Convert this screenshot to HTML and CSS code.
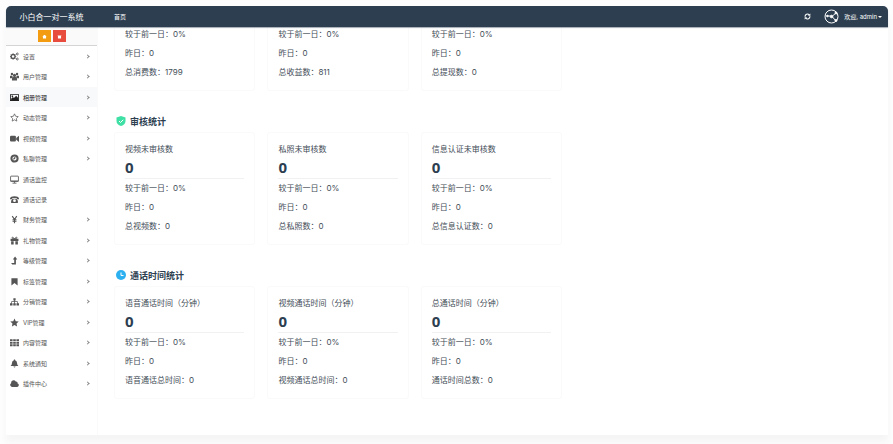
FILE: index.html
```html
<!DOCTYPE html>
<html lang="zh-CN">
<head>
    <meta charset="UTF-8">
    <meta name="viewport" content="width=device-width, initial-scale=1.0">
    <title>小白合一对一系统</title>
    <link rel="stylesheet" href="styles.css">
</head>
<body>
    <div class="window">
        <!-- Header -->
        <header class="topbar">
            <a class="logo" href="#">小白合一对一系统</a>
            <a class="tab" href="#">首页</a>
            <div class="topbar-right">
                <button class="icon-btn" type="button" aria-label="刷新">
                    <svg viewBox="0 0 16 16" fill="none" stroke="currentColor" stroke-width="2.4"><path d="M2.5 8.5A5.5 5.5 0 0 1 12 4.200M13.500 7.500A5.500 5.500 0 0 1 4 11.800"/><path d="M14.500 1v5.500H9zM1.500 15V9.500H7z" fill="currentColor" stroke="none"/></svg>
                </button>
                <button class="user" type="button">
                    <svg class="avatar" viewBox="0 0 30 30" fill="none" stroke="currentColor" stroke-width="2"><circle cx="15" cy="15" r="13"/><path d="M3 14h10M17 14l8-7M17 16l7 8"/><circle cx="15" cy="15" r="2.500" fill="currentColor"/><circle cx="24" cy="8" r="2" fill="currentColor"/><circle cx="24" cy="23" r="2" fill="currentColor"/><circle cx="7" cy="14" r="1.500" fill="currentColor"/></svg>
                    <span>欢迎, admin</span>
                    <span class="caret"></span>
                </button>
            </div>
        </header>

        <div class="body">
            <!-- Sidebar -->
            <aside class="sidebar">
                <div class="shortcuts">
                    <button class="shortcut shortcut-home" type="button" aria-label="主页">
                        <svg viewBox="0 0 16 16" fill="currentColor"><path d="M8 2l7 6h-2v6H3V8H1z"/></svg>
                    </button>
                    <button class="shortcut shortcut-clear" type="button" aria-label="清除">
                        <svg viewBox="0 0 16 16" fill="currentColor"><path d="M2 3h12v2H2zM3 6h10v8H3z"/></svg>
                    </button>
                </div>
                <nav class="menu">
                    <a href="#"><svg viewBox="0 0 16 16" fill="none" stroke="currentColor"><circle cx="5.500" cy="8" r="3.500" stroke-width="2.400"/><path d="M5.500 2.500v2M5.500 11.500v2M0 8h2M9 8h2M1.500 4l1.500 1.500M8 10.500L9.500 12M1.500 12L3 10.500M8 5.500L9.500 4" stroke-width="1.500"/><circle cx="13" cy="3.500" r="1.700" stroke-width="1.500"/><circle cx="13" cy="12.500" r="1.700" stroke-width="1.500"/></svg><span>设置</span><i class="arrow"></i></a>
                    <a href="#"><svg viewBox="0 0 16 16" fill="currentColor"><circle cx="3.500" cy="3.500" r="2.200"/><circle cx="12.500" cy="3.500" r="2.200"/><circle cx="8" cy="6" r="2.800"/><path d="M0 10V7q2-2 4 0l1 2-2 2H0zM16 10V7q-2-2-4 0l-1 2 2 2h3zM3.500 15v-3q0-3 2.500-3h4q2.500 0 2.500 3v3z"/></svg><span>用户管理</span><i class="arrow"></i></a>
                    <a class="active" href="#"><svg viewBox="0 0 16 16" fill="currentColor"><path fill-rule="evenodd" d="M0 2h16v12H0zM1.500 3.500v9h13v-9z"/><path d="M2 12.500V10l3-3 2 2 4-4 3.500 4v3.500zM3 4.500h2.500V7H3z"/></svg><span>相册管理</span><i class="arrow"></i></a>
                    <a href="#"><svg viewBox="0 0 16 16" fill="none" stroke="currentColor" stroke-width="1.300"><path d="M8 1.500l2 4.300 4.700.6-3.400 3.300.8 4.700L8 12.100l-4.100 2.300.8-4.700-3.400-3.300L6 5.800z"/></svg><span>动态管理</span><i class="arrow"></i></a>
                    <a href="#"><svg viewBox="0 0 16 16" fill="currentColor"><rect y="3" width="10.500" height="10.500" rx="2"/><path d="M11 7l5-4v11l-5-4z"/></svg><span>视频管理</span><i class="arrow"></i></a>
                    <a href="#"><svg viewBox="0 0 16 16" fill="none" stroke="currentColor"><circle cx="8" cy="8" r="5.500" stroke-width="3.600"/><path d="M5 10l2-4 3-1-1 4z" fill="currentColor" stroke="none"/></svg><span>私聊管理</span><i class="arrow"></i></a>
                    <a href="#"><svg viewBox="0 0 16 16" fill="none" stroke="currentColor" stroke-width="1.500"><rect x="1" y="2" width="14" height="9.500" rx="1"/><path d="M1 10.500h14M8 11v3M4.500 14.500h7"/></svg><span>通话监控</span></a>
                    <a href="#"><svg viewBox="0 0 16 16" fill="currentColor"><path d="M0 6q1-4 8-4t8 4v1.500h-4V5.500H4v2H0z"/><path fill-rule="evenodd" d="M4.500 6.500h7L14 10v4H2v-4zM8 7.500a2.500 2.500 0 1 0 0 5 2.500 2.500 0 0 0 0-5z"/></svg><span>通话记录</span></a>
                    <a href="#"><svg viewBox="0 0 16 16" fill="none" stroke="currentColor" stroke-width="2"><path d="M4 2l4 6 4-6M8 8v6.500M4.500 8.500h7M4.500 11h7"/></svg><span>财务管理</span><i class="arrow"></i></a>
                    <a href="#"><svg viewBox="0 0 16 16" fill="currentColor"><path d="M1 5h14v4H1zM2 9.500h4.500V15H2zM9.500 9.500H14V15H9.500z"/><path d="M8 5Q3 5 3.500 2.500T8 5q4-5 4.500-2.500T8 5z" fill="none" stroke="currentColor" stroke-width="1.500"/></svg><span>礼物管理</span><i class="arrow"></i></a>
                    <a href="#"><svg viewBox="0 0 16 16" fill="currentColor"><path d="M9 1l4 5h-2.500v9H4l-2-2.500h5.500V6H5z"/></svg><span>等级管理</span><i class="arrow"></i></a>
                    <a href="#"><svg viewBox="0 0 16 16" fill="currentColor"><path d="M2.500 2h11v13L8 10.500 2.500 15z"/></svg><span>标签管理</span><i class="arrow"></i></a>
                    <a href="#"><svg viewBox="0 0 16 16" fill="currentColor"><path d="M6 2h4v4H8.700v1.500h5V11H16v4h-4.500v-4h1V9H8.700v2h1.500v4H5.800v-4h1.500V9H3.500v2h1v4H0v-4h2.300V7.500h5V6H6z"/></svg><span>分销管理</span><i class="arrow"></i></a>
                    <a href="#"><svg viewBox="0 0 16 16" fill="currentColor"><path d="M8 1l2.200 4.700 5.300.6-3.900 3.600 1 5.100L8 12.500 3.400 15l1-5.100L.5 6.300l5.300-.6z"/></svg><span>VIP管理</span><i class="arrow"></i></a>
                    <a href="#"><svg viewBox="0 0 16 16" fill="currentColor"><path d="M0 2h4.600v3.500H0zM5.700 2h4.600v3.500H5.700zM11.400 2H16v3.500h-4.600zM0 6.500h4.600V10H0zM5.700 6.500h4.600V10H5.700zM11.400 6.500H16V10h-4.600zM0 11h4.600v3.500H0zM5.700 11h4.600v3.500H5.700zM11.400 11H16v3.500h-4.600z"/></svg><span>内容管理</span><i class="arrow"></i></a>
                    <a href="#"><svg viewBox="0 0 16 16" fill="currentColor"><path d="M7 1h2v1.300q3.500.7 3.500 5 0 3.500 2.500 5.200H1q2.500-1.700 2.500-5.200 0-4.300 3.500-5zM6 13.300h4q-2 3.200-4 0z"/></svg><span>系统通知</span><i class="arrow"></i></a>
                    <a href="#"><svg viewBox="0 0 16 16" fill="currentColor"><path d="M3.500 14a3.500 3.500 0 0 1-1.500-6.500 4.500 4.500 0 0 1 8.200-3 2.800 2.800 0 0 1 3.300 3.300A3.200 3.200 0 0 1 13 14z"/></svg><span>插件中心</span><i class="arrow"></i></a>
                </nav>
            </aside>

            <!-- Main Content -->
            <main class="content">
                <section class="stats">
                    <div class="cards">
                        <div class="card">
                            <p>较于前一日：0%</p>
                            <p>昨日：0</p>
                            <p>总消费数：1799</p>
                        </div>
                        <div class="card">
                            <p>较于前一日：0%</p>
                            <p>昨日：0</p>
                            <p>总收益数：811</p>
                        </div>
                        <div class="card">
                            <p>较于前一日：0%</p>
                            <p>昨日：0</p>
                            <p>总提现数：0</p>
                        </div>
                    </div>
                </section>

                <section class="stats">
                    <h2>
                        <svg viewBox="0 0 20 20"><path d="M10 0l9 3v7q0 7-9 10Q1 17 1 10V3z" fill="#3fe0a5"/><path d="M6 10l3 3 5.500-5.500" fill="none" stroke="#fff" stroke-width="2"/></svg>
                        审核统计
                    </h2>
                    <div class="cards">
                        <div class="card">
                            <h3>视频未审核数</h3>
                            <strong>0</strong>
                            <p>较于前一日：0%</p>
                            <p>昨日：0</p>
                            <p>总视频数：0</p>
                        </div>
                        <div class="card">
                            <h3>私照未审核数</h3>
                            <strong>0</strong>
                            <p>较于前一日：0%</p>
                            <p>昨日：0</p>
                            <p>总私照数：0</p>
                        </div>
                        <div class="card">
                            <h3>信息认证未审核数</h3>
                            <strong>0</strong>
                            <p>较于前一日：0%</p>
                            <p>昨日：0</p>
                            <p>总信息认证数：0</p>
                        </div>
                    </div>
                </section>

                <section class="stats">
                    <h2>
                        <svg viewBox="0 0 20 20"><circle cx="10" cy="10" r="10" fill="#2db0f0"/><path d="M10 5v6h5" fill="none" stroke="#fff" stroke-width="2"/></svg>
                        通话时间统计
                    </h2>
                    <div class="cards">
                        <div class="card">
                            <h3>语音通话时间（分钟）</h3>
                            <strong>0</strong>
                            <p>较于前一日：0%</p>
                            <p>昨日：0</p>
                            <p>语音通话总时间：0</p>
                        </div>
                        <div class="card">
                            <h3>视频通话时间（分钟）</h3>
                            <strong>0</strong>
                            <p>较于前一日：0%</p>
                            <p>昨日：0</p>
                            <p>视频通话总时间：0</p>
                        </div>
                        <div class="card">
                            <h3>总通话时间（分钟）</h3>
                            <strong>0</strong>
                            <p>较于前一日：0%</p>
                            <p>昨日：0</p>
                            <p>通话时间总数：0</p>
                        </div>
                    </div>
                </section>
            </main>
        </div>
    </div>
</body>
</html>
```

FILE: styles.css
```css
/* Reset and Base Styles */
* {
    margin: 0;
    padding: 0;
    box-sizing: border-box;
}

:root {
    --navy: #2c3e50;
    --text: #3f4d57;
    --line: #f0f1f2;
}

body {
    height: 100vh;
    padding: 6px 5px 9px 6px;
    background-color: #fdfdfd;
    color: var(--text);
    font-family: Inter, "Noto Sans CJK SC", sans-serif;
    font-size: 8px;
    overflow: hidden;
}

a {
    color: inherit;
    text-decoration: none;
}

button {
    border: none;
    background: none;
    color: inherit;
    font: inherit;
    cursor: pointer;
}

.window {
    height: 100%;
    display: flex;
    flex-direction: column;
    border-radius: 5px 5px 0 0;
    background-color: #fff;
    box-shadow: 0 7px 6px #f5f5f5;
}

/* Header Styles */
.topbar {
    flex: none;
    height: 21px;
    display: flex;
    align-items: center;
    background-color: var(--navy);
    border-radius: 5px 5px 0 0;
    box-shadow: 0 1px 1px #a3abb3;
    color: #fff;
    z-index: 1;
}

.logo {
    width: 91px;
    text-align: center;
}

.tab {
    padding: 0 17px;
    font-size: 6px;
}

.topbar-right {
    margin-left: auto;
    padding-right: 6px;
    display: flex;
    align-items: center;
    gap: 13px;
}

.icon-btn,
.user {
    display: flex;
    align-items: center;
}

.icon-btn svg {
    width: 7px;
    height: 7px;
}

.user {
    font-size: 6px;
}

.avatar {
    width: 15px;
    height: 15px;
    margin-right: 5px;
}

.caret {
    margin-left: 1px;
    border: 2px solid transparent;
    border-top-color: #fff;
    border-bottom: none;
}

.body {
    flex: 1;
    min-height: 0;
    display: flex;
}

/* Sidebar */
.sidebar {
    width: 92px;
    display: flex;
    flex-direction: column;
    padding-bottom: 41px;
    border-right: 1px solid #fafafa;
}

.shortcuts {
    height: 19px;
    display: flex;
    justify-content: center;
    align-items: center;
    gap: 2px;
    background-color: #fafafa;
    border-bottom: 1px solid #d4d4d4;
}

.shortcut {
    width: 13px;
    height: 12px;
    display: flex;
    justify-content: center;
    align-items: center;
    color: #fff;
}

.shortcut svg {
    width: 5px;
    height: 5px;
}

.shortcut-home {
    background-color: #f39c12;
}

.shortcut-clear {
    background-color: #e74c3c;
}

.menu {
    flex: 1;
    display: flex;
    flex-direction: column;
}

.menu a {
    flex: 1;
    display: flex;
    align-items: center;
    padding: 0 8px 0 4px;
    color: #555;
    font-size: 6px;
}

.menu a.active {
    background-color: #f8f9fb;
    color: #222;
}

.menu svg {
    width: 9px;
    height: 9px;
    margin-right: 4px;
}

.arrow {
    width: 3px;
    height: 3px;
    margin-left: auto;
    border: solid #888;
    border-width: 1px 1px 0 0;
    transform: rotate(45deg);
}

/* Main Content */
.content {
    flex: 1;
    display: flex;
    flex-direction: column;
    justify-content: flex-end;
    gap: 22px;
    padding: 0 19px 36px 16px;
    overflow: hidden;
}

.stats h2 {
    display: flex;
    align-items: center;
    gap: 4px;
    height: 16px;
    margin: 0 0 3px 2px;
    color: var(--navy);
    font-size: 9px;
    font-weight: bold;
}

.stats h2 svg {
    width: 10px;
    height: 10px;
}

.cards {
    display: grid;
    grid-template-columns: repeat(5, 1fr);
    gap: 12px;
}

.card {
    padding: 8px 10px;
    border: 1px solid #fafafa;
    border-radius: 3px;
}

.card h3 {
    font-size: 8px;
    font-weight: normal;
    line-height: 16px;
}

.card strong {
    display: block;
    border-bottom: 1px solid var(--line);
    color: var(--navy);
    font-family: "Noto Sans", sans-serif;
    font-size: 15px;
    line-height: 21px;
}

.card p {
    line-height: 19px;
    white-space: nowrap;
}
```
